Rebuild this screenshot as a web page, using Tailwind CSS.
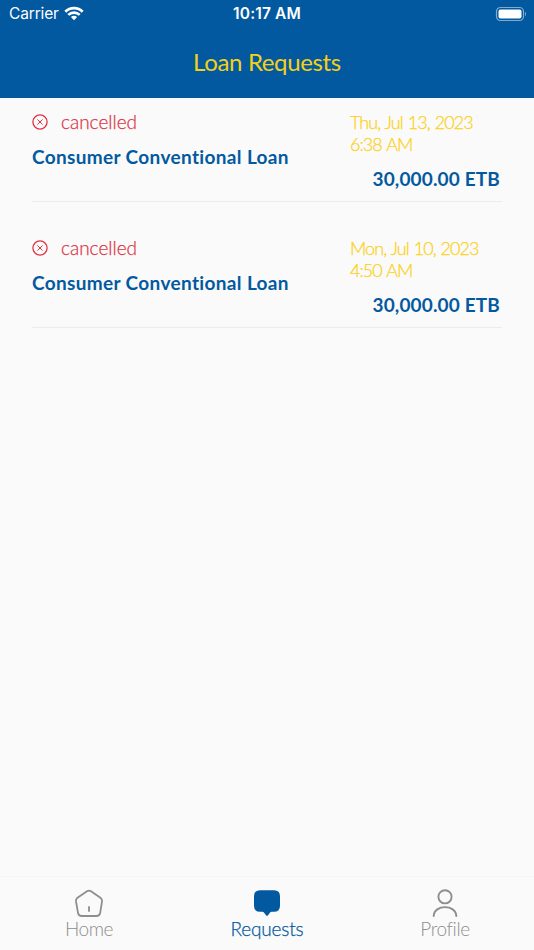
<!DOCTYPE html>
<html lang="en">
<head>
<meta charset="utf-8">
<title>Loan Requests</title>
<script src="https://cdn.jsdelivr.net/npm/@tailwindcss/browser@4"></script>
</head>
<body class="bg-[#fafafa]">
<div class="flex h-[950px] w-[534px] flex-col overflow-hidden bg-[#fafafa] font-['Lato',sans-serif] whitespace-nowrap antialiased">
  <header class="h-[98px] shrink-0 bg-[#0259a0]">
    <div class="grid h-7 grid-cols-3 items-center pl-[9px] pr-[7px] font-['Inter',sans-serif] text-white">
      <div class="flex items-center gap-[5px]">
        <span class="text-[15.5px] leading-7 tracking-[-0.15px]">Carrier</span>
        <svg class="mb-[2px] h-[15px] w-5" viewBox="0 0 20 15" fill="none" stroke="white" stroke-width="2.7"><path d="M1.3 5.7a12.5 12.5 0 0 1 17.4 0M4.3 8.9a8.2 8.2 0 0 1 11.4 0"/><path d="M10 14.2l-3.1-3.1a4.5 4.5 0 0 1 6.2 0z" fill="white" stroke="none"/></svg>
      </div>
      <span class="-ml-0.5 text-center text-[15.5px] leading-7 font-semibold tracking-[0.15px]">10:17 AM</span>
      <svg class="-mt-px h-4 w-8 justify-self-end" viewBox="0 0 32 16" fill="none"><rect x="1.5" y="1.5" width="27" height="13" rx="4" stroke="#80acd0" stroke-width="1.2"/><rect x="3.5" y="3.5" width="23" height="9" rx="2" fill="white"/><path d="M30 5.5q2 2.5 0 5z" fill="#80acd0"/></svg>
    </div>
    <h1 class="mt-[18px] text-center text-[24px] leading-8 tracking-[-0.35px] text-[#f4d016]">Loan Requests</h1>
  </header>
  <main class="flex flex-1 flex-col gap-[22px] px-8">
    <article class="flex h-[104px] justify-between border-b border-[#ececec] pt-[13px] text-[19px] leading-[22px]">
      <div class="flex flex-col gap-[13px]">
        <div class="flex items-center gap-[13px] text-[#dc3545]">
          <svg class="h-4 w-4" viewBox="0 0 16 16" fill="none" stroke="currentColor"><circle cx="8" cy="8" r="7.1" stroke-width="1.3"/><path d="M5.400 5.400l5.200 5.200M10.600 5.400l-5.200 5.200"/></svg>
          <span class="font-light [-webkit-text-stroke:0.25px_currentColor]">cancelled</span>
        </div>
        <h2 class="font-bold tracking-[0.35px] text-[#0259a0]">Consumer Conventional Loan</h2>
      </div>
      <div class="flex w-[152px] flex-col gap-[13px]">
        <p class="text-[18px] font-light tracking-[-0.95px] [word-spacing:1px] text-[#fcd116] [-webkit-text-stroke:0.25px_currentColor]">Thu, Jul 13, 2023<br>6:38 AM</p>
        <p class="pr-0.5 text-right font-bold tracking-[0.15px] text-[#0259a0]">30,000.00 ETB</p>
      </div>
    </article>
    <article class="flex h-[104px] justify-between border-b border-[#ececec] pt-[13px] text-[19px] leading-[22px]">
      <div class="flex flex-col gap-[13px]">
        <div class="flex items-center gap-[13px] text-[#dc3545]">
          <svg class="h-4 w-4" viewBox="0 0 16 16" fill="none" stroke="currentColor"><circle cx="8" cy="8" r="7.1" stroke-width="1.3"/><path d="M5.400 5.400l5.200 5.200M10.600 5.400l-5.200 5.200"/></svg>
          <span class="font-light [-webkit-text-stroke:0.25px_currentColor]">cancelled</span>
        </div>
        <h2 class="font-bold tracking-[0.35px] text-[#0259a0]">Consumer Conventional Loan</h2>
      </div>
      <div class="flex w-[152px] flex-col gap-[13px]">
        <p class="text-[18px] font-light tracking-[-0.95px] [word-spacing:1px] text-[#fcd116] [-webkit-text-stroke:0.25px_currentColor]">Mon, Jul 10, 2023<br>4:50 AM</p>
        <p class="pr-0.5 text-right font-bold tracking-[0.15px] text-[#0259a0]">30,000.00 ETB</p>
      </div>
    </article>
  </main>
  <nav class="grid h-[74px] shrink-0 grid-cols-3 border-t border-[#f6f6f6] pt-3 text-[19px] leading-5 font-light text-[#8e8e8e]">
    <a class="flex flex-col items-center">
      <svg class="h-[30px] w-[30px]" viewBox="0 0 30 30" fill="none" stroke="currentColor" stroke-width="1.8" stroke-linejoin="round" stroke-linecap="round"><path d="M13 2.200Q15 .9 17 2.200L26.400 8.800Q28.300 10.200 28 12.400L26.200 23.800Q25.600 27 22.300 27H7.900Q4.500 27 4 23.800L2 12.400Q1.700 10.200 3.500 8.800Z"/><path d="M15 18v4"/></svg>
      <span class="tracking-[-0.5px]">Home</span>
    </a>
    <a class="flex flex-col items-center text-[#0259a0]">
      <svg class="h-[30px] w-[30px]" viewBox="0 0 30 30" fill="currentColor"><path d="M8 1.200h14q6 0 6 6v9.600q0 6-6 6h-2.500q-.8 0-1.400.7L15.800 26.500q-.8.8-1.600 0L11.900 23.500q-.6-.7-1.400-.7H8q-6 0-6-6V7.200q0-6 6-6z"/></svg>
      <span class="tracking-[-0.15px] [-webkit-text-stroke:0.25px_currentColor]">Requests</span>
    </a>
    <a class="flex flex-col items-center">
      <svg class="h-[30px] w-[30px]" viewBox="0 0 30 30" fill="none" stroke="currentColor" stroke-width="1.9" stroke-linecap="round"><circle cx="15" cy="7.800" r="6.600"/><path d="M3.700 27C4 15.200 26 15.200 26.300 27"/></svg>
      <span class="tracking-[-0.4px]">Profile</span>
    </a>
  </nav>
</div>
</body>
</html>
